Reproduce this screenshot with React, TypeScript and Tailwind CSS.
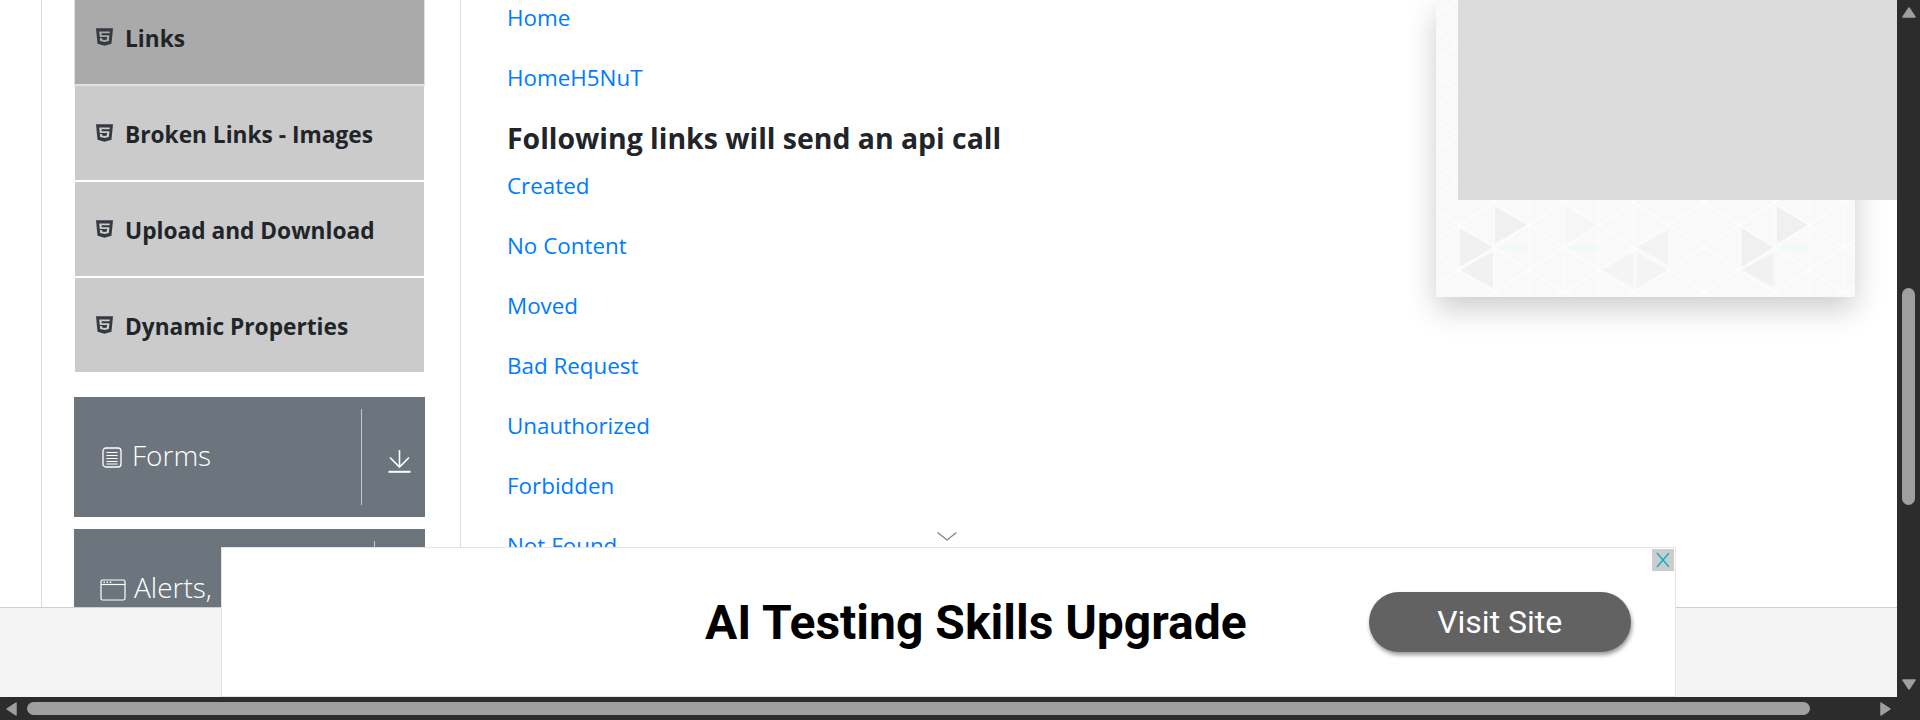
import { FaHtml5 } from "react-icons/fa";

const BODY_FONT = "font-['Open_Sans','Noto_Sans',sans-serif]";

const ELEMENT_ROWS = [
  { label: "Links", active: true, height: "h-[97px]" },
  { label: "Broken Links - Images", active: false, height: "h-[96px]" },
  { label: "Upload and Download", active: false, height: "h-[96px]" },
  { label: "Dynamic Properties", active: false, height: "h-[96px]" },
];

const API_LINKS = ["Created", "No Content", "Moved", "Bad Request", "Unauthorized", "Forbidden", "Not Found"];

// mesh columns of the ad's background image, in card coordinates
const MESH_COLUMNS = Array.from({ length: 14 }, (_, i) => -12 + i * 35);
const MESH_ROWS = Array.from({ length: 10 }, (_, i) => -45 + i * 45);

const TRIANGLES = [
  { points: "59,207 59,243 91,225", fill: "#f0f0f0" },
  { points: "23,228 23,267 57,247", fill: "#f0f0f0" },
  { points: "57,252 57,288 24,270", fill: "#f1f1f1" },
  { points: "341,207 341,243 373,225", fill: "#f0f0f0" },
  { points: "306,228 306,267 339,247", fill: "#f0f0f0" },
  { points: "339,252 339,288 306,270", fill: "#f1f1f1" },
  { points: "233,230 233,265 201,247", fill: "#f3f3f3" },
  { points: "199,252 199,288 166,270", fill: "#f4f4f4" },
  { points: "201,252 201,288 233,270", fill: "#f4f4f4" },
  { points: "130,208 130,243 162,225", fill: "#f6f6f6" },
];

function AdPattern() {
  return (
    <svg viewBox="0 0 419 297" className="h-full w-full blur-[0.6px]" fill="none">
      {TRIANGLES.map((triangle) => (
        <polygon key={triangle.points} points={triangle.points} fill={triangle.fill} />
      ))}
      {MESH_COLUMNS.map((x, col) => (
        <g key={x} stroke="#ffffff" strokeWidth="1.3" strokeOpacity="0.8">
          <line x1={x} y1="0" x2={x} y2="297" strokeOpacity="0.6" />
          {MESH_ROWS.map((row) => {
            const y = row + (col % 2 === 1 ? 0 : 22.5);
            return (
              <g key={row}>
                <line x1={x} y1={y} x2={x + 35} y2={y + 22.5} />
                <line x1={x} y1={y} x2={x + 35} y2={y - 22.5} />
              </g>
            );
          })}
        </g>
      ))}
      <g stroke="#eafbfa" strokeWidth="3">
        <line x1="64" y1="248" x2="92" y2="248" />
        <line x1="132" y1="248" x2="164" y2="248" />
        <line x1="346" y1="248" x2="374" y2="248" />
      </g>
    </svg>
  );
}

function FormsIcon() {
  return (
    <svg viewBox="0 0 20 21" className="h-[21px] w-[20px]" fill="none" stroke="#fff">
      <rect x="1" y="1" width="18" height="19" rx="3" strokeWidth="1.3" />
      <path d="M4.5 5.5h11M4.5 8.5h11M4.5 11.5h11M4.5 14.5h11M4.5 17h11" strokeWidth="1.1" />
    </svg>
  );
}

function WindowIcon() {
  return (
    <svg viewBox="0 0 26 22" className="mt-[11px] h-[22px] w-[26px] shrink-0" fill="none" stroke="#fff">
      <rect x="1" y="1" width="24" height="20" rx="1.5" strokeWidth="1.2" />
      <path d="M1 5.5h24" strokeWidth="1.2" />
      <path d="M3.5 3.2h1.4M6.7 3.2h1.4M9.9 3.2h1.4" strokeWidth="1.5" />
    </svg>
  );
}

function DownloadIcon() {
  return (
    <svg viewBox="0 0 23 23" className="h-[23px] w-[23px]" fill="none" stroke="#fff">
      <path d="M11.5 0v17M2 7.5l9.5 9.5 9.5-9.5" strokeWidth="1.6" />
      <path d="M0.5 21.8h22" strokeWidth="2" />
    </svg>
  );
}

function ScrollArrow({ points, className }: { points: string; className: string }) {
  return (
    <svg viewBox="0 0 16 16" className={className}>
      <polygon points={points} fill="#9f9f9f" stroke="#9f9f9f" strokeWidth="1.5" strokeLinejoin="round" />
    </svg>
  );
}

function Sidebar() {
  return (
    <aside className="-mt-[11px] flex w-[420px] shrink-0 flex-col border-x border-[#dcdcdc] pl-[32px]">
      <ul className="w-[351px] shrink-0">
        {ELEMENT_ROWS.map((row) => (
          <li
            key={row.label}
            className={`flex ${row.height} items-center border-x border-b-2 border-white pl-[21px] text-[22.7px] font-bold leading-[30px] text-[#212529] ${
              row.active ? "border-x-[#dee2e6] border-b-[#dee2e6] bg-[#aaaaaa]" : "bg-[#cbcbcb]"
            }`}
          >
            <FaHtml5 preserveAspectRatio="none" className="mr-[12px] h-[20px] w-[17px] text-[#343a40]" />
            <span className="pt-[4px]">{row.label}</span>
          </li>
        ))}
      </ul>
      <div className="mt-[23px] flex h-[120px] w-[351px] shrink-0 bg-[#6c757d] text-white">
        <div className="flex flex-1 items-center pl-[28px] text-[28px] font-light">
          <FormsIcon />
          <span className="ml-[10px] -mt-[4px]">Forms</span>
        </div>
        <div className="my-[12px] flex w-[64px] items-center justify-center border-l border-[#c4c8cb] pl-[12px] pt-[8px]">
          <DownloadIcon />
        </div>
      </div>
      <div className="mt-[12px] flex h-[120px] w-[351px] shrink-0 bg-[#6c757d] text-white">
        <div className="flex flex-1 items-start pl-[26px] pt-[39px] text-[28px] font-light leading-[38px]">
          <WindowIcon />
          <span className="ml-[8px] w-[240px]">Alerts, Frame &amp; Windows</span>
        </div>
        <div className="my-[12px] w-[64px] border-l border-[#c4c8cb]" />
      </div>
    </aside>
  );
}

function LinksColumn() {
  return (
    <div className="pl-[46px] pt-[3px] text-[22.4px] leading-[30px] text-[#007bff]">
      <p className="mb-[30px]">Home</p>
      <p className="mb-[30px]">HomeH5NuT</p>
      <h5 className="mb-[18px] text-[28.4px] font-bold leading-[30px] text-[#212529]">Following links will send an api call</h5>
      {API_LINKS.map((label) => (
        <p key={label} className="mb-[30px]">
          {label}
        </p>
      ))}
    </div>
  );
}

function BottomAd() {
  return (
    <div className="absolute bottom-0 left-[221px] flex h-[150px] w-[1455px] items-center border border-[#e5e5e5] bg-white pl-[483px] font-['Roboto',sans-serif]">
      <span className="pt-[2px] text-[48px] font-bold text-black">AI Testing Skills Upgrade</span>
      <span className="ml-[122px] flex h-[60px] w-[262px] items-center justify-center rounded-[30px] bg-[#626262] text-[32px] text-white shadow-[1px_3px_4px_rgba(0,0,0,0.4)]">
        Visit Site
      </span>
      <span className="absolute right-[1px] top-[1px] flex h-[22px] w-[22px] items-center justify-center bg-[#cccccc]">
        <svg viewBox="0 0 16 16" className="h-[16px] w-[16px]" fill="none" stroke="#00aecd" strokeWidth="1.3">
          <path d="M2 1l12 14M14 1L2 15" />
        </svg>
      </span>
    </div>
  );
}

export default function App() {
  return (
    <div className={`grid h-[720px] w-[1920px] grid-cols-[1897px_23px] grid-rows-[697px_23px] overflow-hidden bg-[#2c2c2c] ${BODY_FONT}`}>
      <div className="relative flex flex-col overflow-hidden bg-white">
        <div className="flex h-[607px] overflow-hidden pl-[41px]">
          <Sidebar />
          <main className="flex flex-1 justify-between">
            <LinksColumn />
            <div className="relative mr-[42px] h-[297px] w-[419px] bg-[#f9f9f9] shadow-[0_12px_28px_rgba(0,0,0,0.2)]">
              <AdPattern />
              <div className="absolute -right-[42px] top-0 h-[200px] w-[439px] bg-[#dcdcdc]" />
            </div>
          </main>
        </div>
        <footer className="h-[90px] border-t border-[#cfcfcf] bg-[#f4f4f4]" />
        <svg viewBox="0 0 20 9" className="absolute left-[937px] top-[532px] h-[9px] w-[20px]" fill="none" stroke="#808080" strokeWidth="1.2">
          <path d="M0.5 0.5L10 8l9.5-7.5" />
        </svg>
        <BottomAd />
      </div>

      {/* vertical scrollbar */}
      <div className="flex flex-col items-center pt-[4px]">
        <ScrollArrow points="8,4 14,13 2,13" className="h-[16px] w-[16px]" />
        <div className="mt-[268px] h-[217px] w-[13px] rounded-full bg-[#9f9f9f]" />
        <ScrollArrow points="2,3 14,3 8,12" className="mt-auto mb-[4px] h-[16px] w-[16px]" />
      </div>

      {/* horizontal scrollbar */}
      <div className="flex items-center pl-[4px]">
        <ScrollArrow points="12,2 12,14 3,8" className="h-[16px] w-[16px]" />
        <div className="ml-[7px] h-[13px] w-[1783px] rounded-full bg-[#9f9f9f]" />
        <ScrollArrow points="4,2 4,14 13,8" className="ml-[67px] h-[16px] w-[16px]" />
      </div>
      <div />
    </div>
  );
}
